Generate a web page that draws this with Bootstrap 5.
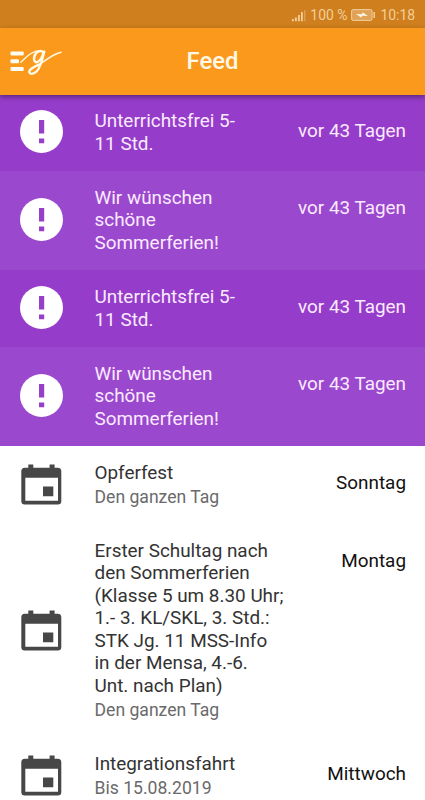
<!DOCTYPE html>
<html lang="de">
<head>
<meta charset="utf-8">
<meta name="viewport" content="width=device-width, initial-scale=1">
<title>Feed</title>
<link href="https://cdn.jsdelivr.net/npm/bootstrap@5.3.0/dist/css/bootstrap.min.css" rel="stylesheet">
<style>
body{font-family:Roboto,"Liberation Sans",sans-serif;height:800px;overflow:hidden;font-size:18.9px;line-height:22.5px}
.status-bar{height:28px;background:#cf7f1e;color:#f3cf9c;font-size:13.9px;padding:2px 10px 0 0}
.app-bar{height:66.6px;background:#fa991c;box-shadow:0 2px 5px rgba(0,0,0,.4);z-index:2}
.app-title{font-size:23.9px;font-weight:500;color:#fff8e6}
.logo-slot{width:70px}
.feed-row{padding:15.8px 19px 15.8px 20px}
.feed-icon{width:43px;margin:0 31.5px 2px 0}
.feed-date{padding-top:10px;color:#111}
.feed-sub{font-size:17.6px;line-height:26px;color:#6a6a6a}
.notice{background:#9a48ce;color:#fbeaff}
.notice.alt-tone{background:#953dca}
.notice .feed-date{color:#fbeaff}
.event-row{color:#333;padding-bottom:13.8px}
.event-row .feed-icon{margin-bottom:3px}
</style>
<script src="https://cdn.jsdelivr.net/npm/bootstrap@5.3.0/dist/js/bootstrap.bundle.min.js"></script>
</head>
<body class="bg-white">
<svg class="d-none">
<symbol id="alert" viewBox="0 0 43 43"><circle cx="21.5" cy="21.5" r="21.5" fill="#fff"/><path d="M19 10h5.2v13.6H19zM19 28.6h5.2v4.6H19z" fill="#9440c8"/></symbol>
<symbol id="event" viewBox="0 0 43 41"><path fill="#474747" fill-rule="evenodd" d="M8.3.5h5v3.3h16.3V.5h5v3.3h3.2a3.5 3.5 0 0 1 3.5 3.5V37a3.5 3.5 0 0 1-3.5 3.5H4.8A3.5 3.5 0 0 1 1.300 37V7.300a3.500 3.500 0 0 1 3.500-3.500h3.500zM5.300 13.800v22.900H38V13.800zM23 22.500h10.300v9.800H23z"/></symbol>
</svg>
<div class="status-bar d-flex justify-content-end align-items-center">
<svg width="14" height="13" viewBox="0 0 14 13" fill="#f3cf9c"><path d="M0 10h1.800v2.200H0zM3 8.500h1.800v3.700H3zM6 6h1.800v6.200H6zM9 3h1.800v9.200H9z"/><path d="M12 1h1.500v11.200H12z" opacity=".4"/></svg>
<span class="ms-1">100 %</span>
<svg class="ms-1" width="25" height="12" viewBox="0 0 25 12"><rect x=".6" y=".6" width="20.500" height="10.800" rx="1.500" fill="#e0a257" stroke="#f3cf9c"/><path d="M22.500 3h1.500v6h-1.500z" fill="#f3cf9c"/><path d="M5 5l6 .2.500-2L17 7l-6-.2-.5 2z" fill="#fff6e6"/></svg>
<span class="ms-1">10:18</span>
</div>
<header class="app-bar position-relative d-flex align-items-center justify-content-between">
<svg class="logo-slot" height="40" viewBox="0 0 70 40" fill="none"><g fill="#fffdf3"><rect x="10.500" y="10.500" width="13.200" height="4" rx="1"/><rect x="10.500" y="18.200" width="8.500" height="4" rx="1"/><rect x="10.500" y="26" width="13.200" height="4" rx="1"/></g><g stroke="#fffbe6" stroke-linecap="round" stroke-linejoin="round"><path d="M20.800 21.200C26 16.500 32 9.700 40 9.700" stroke-width="1.300"/><path d="M43.300 11.300c-2.500-2.600-7-.8-8.600 3.200-1.800 4.800.5 8 3.300 6.300 2.700-1.600 4.700-6 5.700-9.500" stroke-width="2.500"/><path d="M44.300 10.500c-1.500 6.500-3 12.500-5.800 17.500-2.300 4.200-8.500 6.500-9.200 3.300-.6-3 4.700-5.300 9.500-7.600" stroke-width="2.300"/><path d="M38.800 23.700C46 20 49.500 14.500 61 11.200" stroke-width="1.500"/></g></svg>
<h1 class="app-title mb-0">Feed</h1>
<span class="logo-slot"></span>
</header>
<main>
<section class="notice alt-tone feed-row d-flex"><svg class="feed-icon flex-shrink-0 align-self-center" height="43"><use href="#alert"/></svg><div class="flex-grow-1 text-nowrap">Unterrichtsfrei 5-<br>11 Std.</div><div class="feed-date text-nowrap">vor 43 Tagen</div></section>
<section class="notice feed-row d-flex"><svg class="feed-icon flex-shrink-0 align-self-center" height="43"><use href="#alert"/></svg><div class="flex-grow-1 text-nowrap">Wir wünschen<br>schöne<br>Sommerferien!</div><div class="feed-date text-nowrap">vor 43 Tagen</div></section>
<section class="notice alt-tone feed-row d-flex"><svg class="feed-icon flex-shrink-0 align-self-center" height="43"><use href="#alert"/></svg><div class="flex-grow-1 text-nowrap">Unterrichtsfrei 5-<br>11 Std.</div><div class="feed-date text-nowrap">vor 43 Tagen</div></section>
<section class="notice feed-row d-flex"><svg class="feed-icon flex-shrink-0 align-self-center" height="43"><use href="#alert"/></svg><div class="flex-grow-1 text-nowrap">Wir wünschen<br>schöne<br>Sommerferien!</div><div class="feed-date text-nowrap">vor 43 Tagen</div></section>
<section class="event-row feed-row d-flex"><svg class="feed-icon flex-shrink-0 align-self-center" height="41"><use href="#event"/></svg><div class="flex-grow-1 text-nowrap">Opferfest<div class="feed-sub">Den ganzen Tag</div></div><div class="feed-date text-nowrap">Sonntag</div></section>
<section class="event-row feed-row d-flex"><svg class="feed-icon flex-shrink-0 align-self-center" height="41"><use href="#event"/></svg><div class="flex-grow-1 text-nowrap">Erster Schultag nach<br>den Sommerferien<br>(Klasse 5 um 8.30 Uhr;<br>1.- 3. KL/SKL, 3. Std.:<br>STK Jg. 11 MSS-Info<br>in der Mensa, 4.-6.<br>Unt. nach Plan)<div class="feed-sub">Den ganzen Tag</div></div><div class="feed-date text-nowrap">Montag</div></section>
<section class="event-row feed-row d-flex"><svg class="feed-icon flex-shrink-0 align-self-center" height="41"><use href="#event"/></svg><div class="flex-grow-1 text-nowrap">Integrationsfahrt<div class="feed-sub">Bis 15.08.2019</div></div><div class="feed-date text-nowrap">Mittwoch</div></section>
</main>
</body>
</html>
